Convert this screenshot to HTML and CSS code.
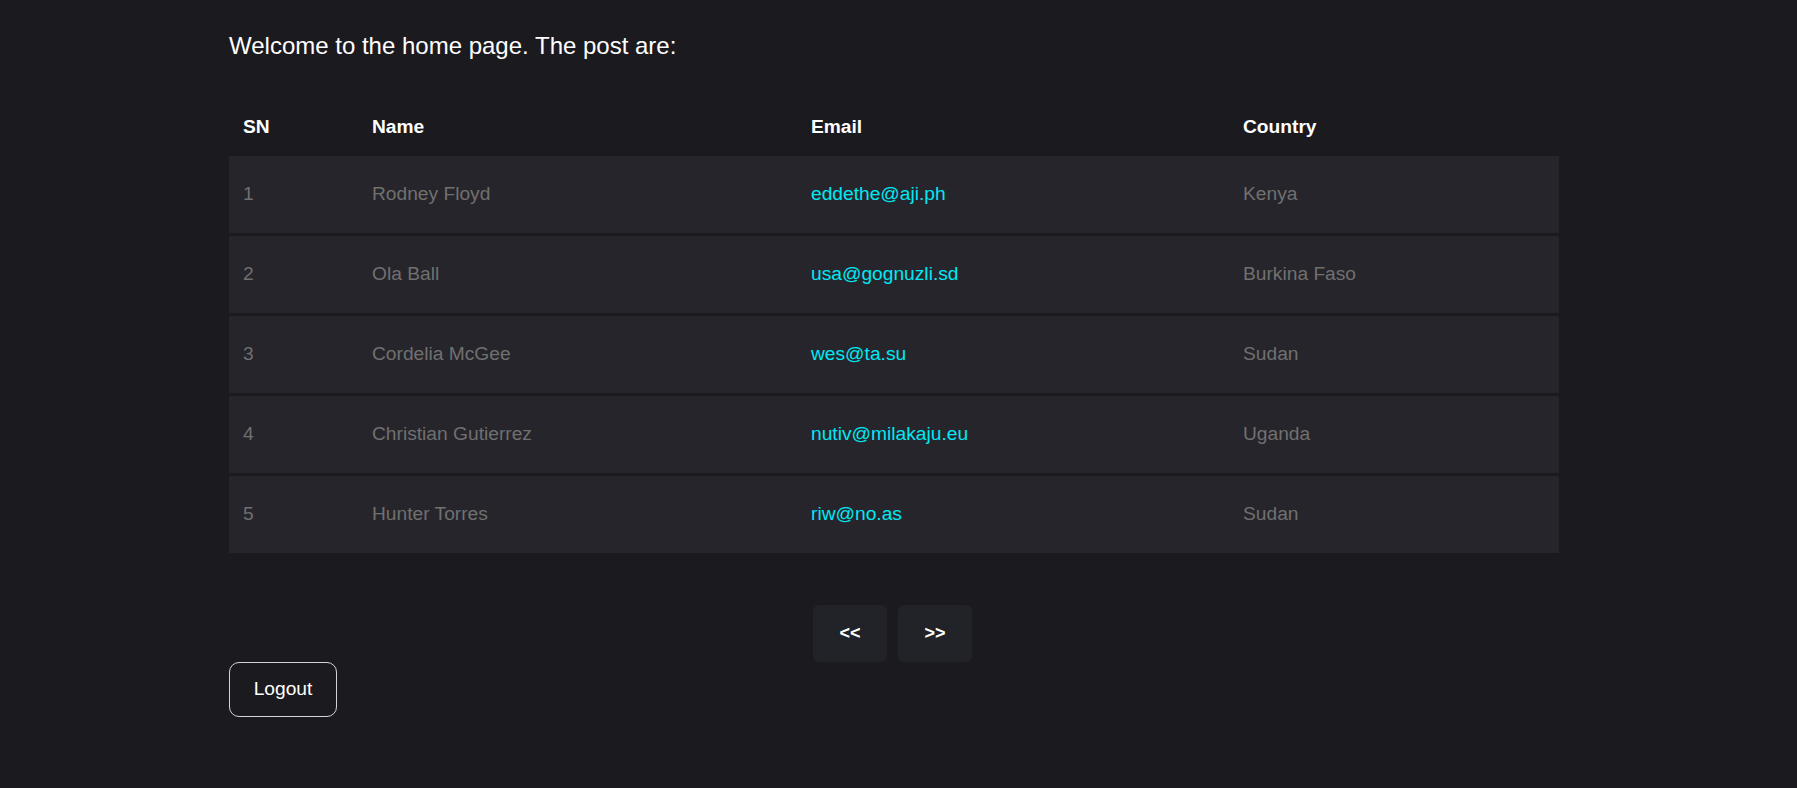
FILE: index.html
```html
<!DOCTYPE html>
<html lang="en">
<head>
<meta charset="utf-8">
<title>Home</title>
<link rel="stylesheet" href="styles.css">
</head>
<body>
<main class="page">
  <p class="intro">Welcome to the home page. The post are:</p>
  <table class="posts">
    <colgroup>
      <col class="c-sn"><col class="c-name"><col class="c-email"><col class="c-country">
    </colgroup>
    <thead>
      <tr><th>SN</th><th>Name</th><th>Email</th><th>Country</th></tr>
    </thead>
    <tbody>
      <tr><td>1</td><td>Rodney Floyd</td><td class="email">eddethe@aji.ph</td><td>Kenya</td></tr>
      <tr><td>2</td><td>Ola Ball</td><td class="email">usa@gognuzli.sd</td><td>Burkina Faso</td></tr>
      <tr><td>3</td><td>Cordelia McGee</td><td class="email">wes@ta.su</td><td>Sudan</td></tr>
      <tr><td>4</td><td>Christian Gutierrez</td><td class="email">nutiv@milakaju.eu</td><td>Uganda</td></tr>
      <tr><td>5</td><td>Hunter Torres</td><td class="email">riw@no.as</td><td>Sudan</td></tr>
    </tbody>
  </table>
  <div class="pager">
    <button class="pager-btn">&lt;&lt;</button>
    <button class="pager-btn">&gt;&gt;</button>
  </div>
  <button class="logout">Logout</button>
</main>
</body>
</html>
```
FILE: styles.css
```css
html, body {
  margin: 0;
  padding: 0;
  background: #1b1a1f;
  font-family: "Liberation Sans", Arial, sans-serif;
  color: #ffffff;
}
.page {
  width: 1330px;
  margin-left: 229px;
  padding-top: 32px;
}
.intro {
  margin: 0;
  font-size: 24px;
  line-height: 27.6px;
  color: #ffffff;
}
.posts {
  width: 1330px;
  margin-top: 38px;
  border-collapse: separate;
  border-spacing: 0 3px;
  table-layout: fixed;
  font-size: 19.2px;
  line-height: 22px;
}
.c-sn { width: 129px; }
.c-name { width: 439px; }
.c-email { width: 432px; }
.c-country { width: 330px; }
.posts th {
  text-align: left;
  font-weight: bold;
  color: #ffffff;
  padding: 15px 14px;
}
.posts td {
  background: #26252b;
  color: #707070;
  padding: 27px 14px 28px;
}
.posts td.email {
  color: #00e8f4;
}
.pager {
  display: flex;
  justify-content: center;
  gap: 11px;
  margin-top: 49px;
  margin-left: -3px;
}
.pager-btn {
  width: 74px;
  height: 57px;
  border: none;
  border-radius: 6px;
  background: #212328;
  color: #ffffff;
  font-family: "Liberation Sans", Arial, sans-serif;
  font-weight: bold;
  font-size: 18px;
}
.logout {
  display: block;
  width: 108px;
  height: 55px;
  border: 1px solid #d4d4d4;
  border-radius: 10px;
  background: #1b1a1f;
  color: #ffffff;
  font-family: "Liberation Sans", Arial, sans-serif;
  font-size: 19.2px;
}
```
